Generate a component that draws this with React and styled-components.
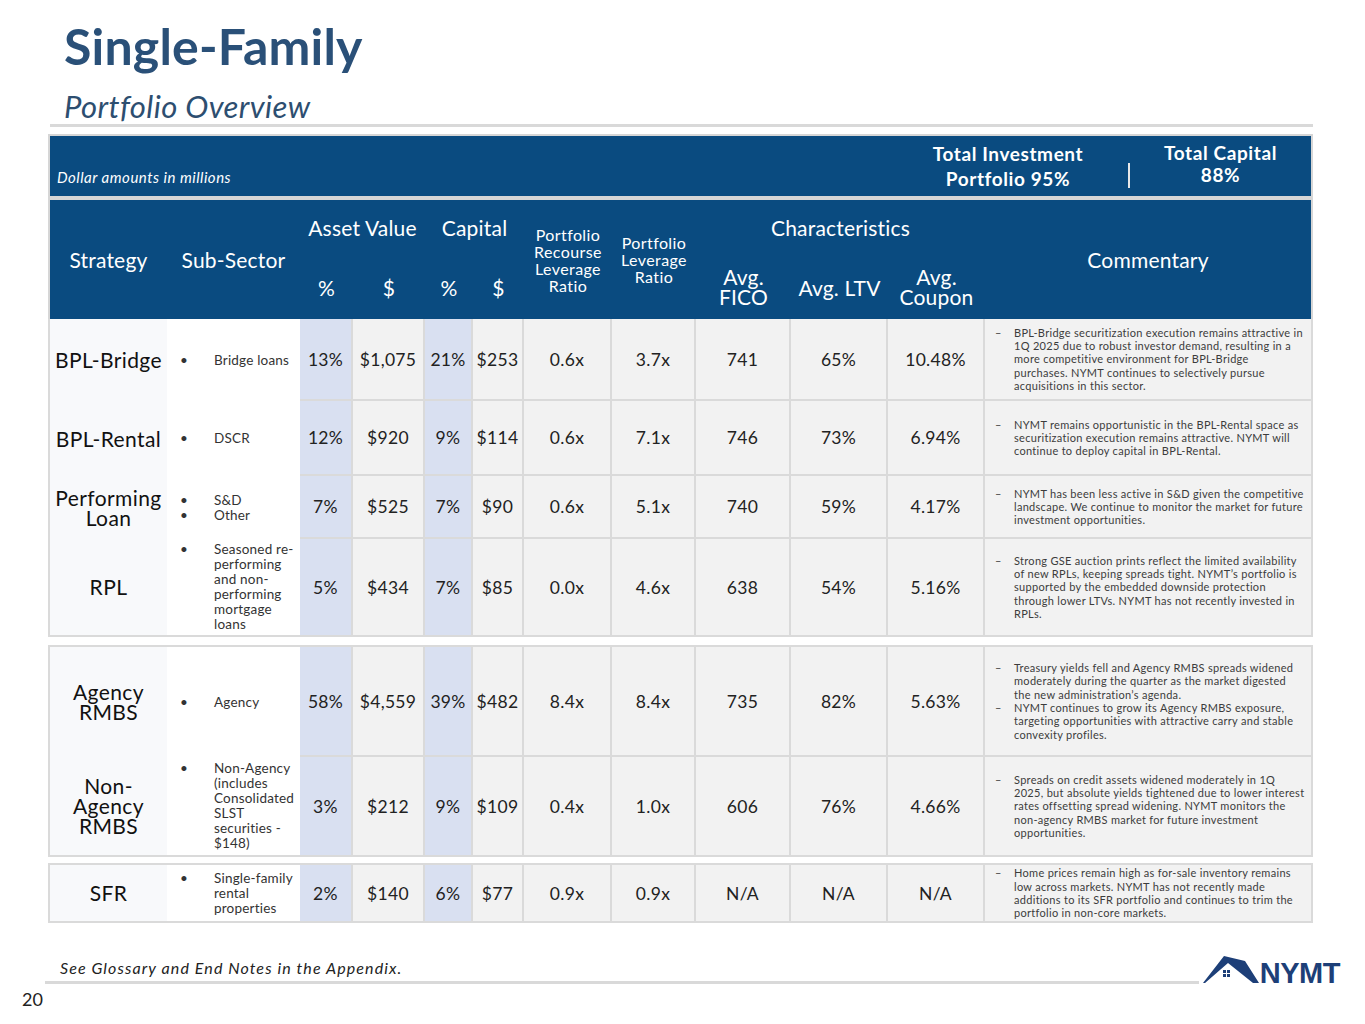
import React from 'react';
import styled, { createGlobalStyle } from 'styled-components';

const BLUE = '#0a4b80';
const LINE = '#dadada';
const COLS = '117px 133px 53px 72px 48px 51px 88px 84px 95px 97px 97px 1fr';

const GlobalStyle = createGlobalStyle`
    html, body {
        margin: 0;
        padding: 0;
        background: #fff;
    }
    body {
        font-family: Lato, "Noto Sans", sans-serif;
        color: #222;
    }
`;

const Page = styled.div`
    width: 1365px;
    height: 1024px;
    overflow: hidden;
    display: flex;
    flex-direction: column;
`;

const TitleBlock = styled.div`
    padding: 16px 0 0 64px;
`;

const Title = styled.h1`
    margin: 0;
    font-size: 50px;
    line-height: 60px;
    font-weight: 700;
    color: #2a5078;
    letter-spacing: 0.2px;
`;

const Subtitle = styled.h2`
    margin: 12px 0 0;
    font-size: 31px;
    line-height: 36px;
    font-weight: 400;
    font-style: italic;
    color: #2d4e70;
    letter-spacing: 0.4px;
`;

const TopRule = styled.div`
    margin: 0 52px 0 50px;
    height: 3px;
    background: #d9d9d9;
`;

const Table = styled.div`
    margin: 7px 0 0 48px;
    width: 1265px;
    display: flex;
    flex-direction: column;
`;

const Banner = styled.div`
    height: 64px;
    box-sizing: border-box;
    border: 2px solid #d6d6d6;
    background: ${BLUE};
    display: flex;
    color: #fff;
`;

const BannerNote = styled.div`
    flex: 1;
    align-self: flex-end;
    padding: 0 0 10px 7px;
    font-size: 15px;
    font-style: italic;
    letter-spacing: 0.5px;
`;

const Stat = styled.div`
    width: ${p => p.$w}px;
    align-self: center;
    text-align: center;
    font-size: 19px;
    font-weight: 700;
    letter-spacing: 0.6px;
    line-height: ${p => p.$lh}px;
    margin-top: ${p => p.$mt || 0}px;
`;

const StatDivider = styled.div`
    width: 2px;
    height: 25px;
    background: #e8e8e8;
    align-self: flex-end;
    margin: 0 0 8px 25px;
`;

const Header = styled.div`
    display: grid;
    grid-template-columns: ${COLS};
    grid-template-rows: 55px 64px;
    background: ${BLUE};
    border: 2px solid #d6d6d6;
    border-bottom: none;
    color: #fff;
`;

const HeadCell = styled.div`
    grid-column: ${p => p.$col};
    grid-row: ${p => p.$row};
    display: flex;
    align-items: center;
    justify-content: center;
    text-align: center;
    font-size: ${p => p.$size || 21}px;
    line-height: ${p => p.$lh || 21}px;
    letter-spacing: ${p => p.$ls ?? 0.2}px;
`;

const Group = styled.div`
    display: flex;
    flex-direction: column;
    border: 2px solid ${LINE};
    border-top: ${p => (p.$open ? 'none' : `2px solid ${LINE}`)};
    margin-top: ${p => p.$gap || 0}px;
`;

const Row = styled.div`
    display: grid;
    grid-template-columns: ${COLS};
    height: ${p => p.$h}px;
`;

const tones = {
    strategy: '#f8f9fb',
    sub: '#ffffff',
    pct: '#d9e0f1',
    num: '#f2f2f2',
    comment: '#f2f2f2',
};

const Cell = styled.div`
    box-sizing: border-box;
    display: flex;
    align-items: center;
    justify-content: ${p => (p.$tone === 'sub' || p.$tone === 'comment' ? 'flex-start' : 'center')};
    background: ${p => tones[p.$tone]};
    border-right: ${p => (p.$tone === 'strategy' || p.$tone === 'sub' || p.$tone === 'comment' ? 'none' : `2px solid ${LINE}`)};
    border-bottom: ${p => (p.$last || p.$tone === 'strategy' || p.$tone === 'sub' ? 'none' : `2px solid ${LINE}`)};
    font-size: 17.5px;
    letter-spacing: 0.3px;
    color: #222;
`;

const StrategyName = styled.div`
    text-align: center;
    font-size: 21px;
    line-height: 20px;
    letter-spacing: 0.4px;
    color: #111;
`;

const SubList = styled.div`
    display: flex;
    flex-direction: column;
    padding-left: 13px;
`;

const SubItem = styled.div`
    display: flex;
    font-size: 13.5px;
    line-height: 15px;
    letter-spacing: 0.2px;
    color: #333;
`;

const Bullet = styled.span`
    width: 34px;
    flex: none;
`;

const CommentList = styled.div`
    display: flex;
    flex-direction: column;
    padding-left: 10px;
    font-size: 11px;
    line-height: 13.3px;
    letter-spacing: 0.3px;
    color: #3c3c3c;
`;

const CommentItem = styled.div`
    display: flex;
`;

const Dash = styled.span`
    width: 19px;
    flex: none;
`;

const Lines = styled.div`
    white-space: nowrap;
`;

const Footer = styled.div`
    display: flex;
    align-items: flex-end;
    padding: 0 25px 0 45px;
    margin-top: 31px;
`;

const FootLeft = styled.div`
    flex: 1;
    display: flex;
    flex-direction: column;
`;

const Note = styled.div`
    padding-left: 15px;
    font-size: 16px;
    line-height: 20px;
    font-style: italic;
    letter-spacing: 1.1px;
    color: #222;
`;

const FootRule = styled.div`
    margin-top: 3px;
    height: 3px;
    background: #d9d9d9;
`;

const Logo = styled.div`
    display: flex;
    align-items: flex-end;
    margin-left: 2px;
    color: #1d3f78;
`;

const LogoText = styled.span`
    font-family: "Liberation Sans", Arial, sans-serif;
    font-weight: 700;
    font-size: 29px;
    line-height: 21px;
    letter-spacing: -0.5px;
    margin-left: 1px;
`;

const PageNum = styled.div`
    padding: 5px 0 0 22px;
    font-size: 18px;
    line-height: 20px;
    color: #222;
`;

const groups = [
    [
        {
            h: 82,
            name: ['BPL-Bridge'],
            sub: [['Bridge loans']],
            v: ['13%', '$1,075', '21%', '$253', '0.6x', '3.7x', '741', '65%', '10.48%'],
            c: [[
                'BPL-Bridge securitization execution remains attractive in',
                '1Q 2025 due to robust investor demand, resulting in a',
                'more competitive environment for BPL-Bridge',
                'purchases. NYMT continues to selectively pursue',
                'acquisitions in this sector.',
            ]],
        },
        {
            h: 75,
            name: ['BPL-Rental'],
            sub: [['DSCR']],
            v: ['12%', '$920', '9%', '$114', '0.6x', '7.1x', '746', '73%', '6.94%'],
            c: [[
                'NYMT remains opportunistic in the BPL-Rental space as',
                'securitization execution remains attractive. NYMT will',
                'continue to deploy capital in BPL-Rental.',
            ]],
        },
        {
            h: 63,
            name: ['Performing', 'Loan'],
            sub: [['S&D'], ['Other']],
            v: ['7%', '$525', '7%', '$90', '0.6x', '5.1x', '740', '59%', '4.17%'],
            c: [[
                'NYMT has been less active in S&D given the competitive',
                'landscape. We continue to monitor the market for future',
                'investment opportunities.',
            ]],
        },
        {
            h: 96,
            name: ['RPL'],
            sub: [['Seasoned re-', 'performing', 'and non-', 'performing', 'mortgage', 'loans']],
            v: ['5%', '$434', '7%', '$85', '0.0x', '4.6x', '638', '54%', '5.16%'],
            c: [[
                'Strong GSE auction prints reflect the limited availability',
                'of new RPLs, keeping spreads tight. NYMT\u2019s portfolio is',
                'supported by the embedded downside protection',
                'through lower LTVs. NYMT has not recently invested in',
                'RPLs.',
            ]],
        },
    ],
    [
        {
            h: 110,
            name: ['Agency', 'RMBS'],
            sub: [['Agency']],
            v: ['58%', '$4,559', '39%', '$482', '8.4x', '8.4x', '735', '82%', '5.63%'],
            c: [
                [
                    'Treasury yields fell and Agency RMBS spreads widened',
                    'moderately during the quarter as the market digested',
                    'the new administration\u2019s agenda.',
                ],
                [
                    'NYMT continues to grow its Agency RMBS exposure,',
                    'targeting opportunities with attractive carry and stable',
                    'convexity profiles.',
                ],
            ],
        },
        {
            h: 98,
            name: ['Non-', 'Agency', 'RMBS'],
            sub: [['Non-Agency', '(includes', 'Consolidated', 'SLST', 'securities -', '$148)']],
            v: ['3%', '$212', '9%', '$109', '0.4x', '1.0x', '606', '76%', '4.66%'],
            c: [[
                'Spreads on credit assets widened moderately in 1Q',
                '2025, but absolute yields tightened due to lower interest',
                'rates offsetting spread widening. NYMT monitors the',
                'non-agency RMBS market for future investment',
                'opportunities.',
            ]],
        },
    ],
    [
        {
            h: 56,
            name: ['SFR'],
            sub: [['Single-family', 'rental', 'properties']],
            v: ['2%', '$140', '6%', '$77', '0.9x', '0.9x', 'N/A', 'N/A', 'N/A'],
            c: [[
                'Home prices remain high as for-sale inventory remains',
                'low across markets. NYMT has not recently made',
                'additions to its SFR portfolio and continues to trim the',
                'portfolio in non-core markets.',
            ]],
        },
    ],
];

const valueTone = i => (i === 0 || i === 2 ? 'pct' : 'num');

const Roof = () => (
    <svg width="58" height="30" viewBox="0 0 58 30">
        <polygon points="2,29 23,2 44,7 58,29 52,29 27,9 4,29" fill="currentColor" />
        <rect x="22" y="16" width="3" height="3" fill="currentColor" />
        <rect x="26" y="16" width="3" height="3" fill="currentColor" />
        <rect x="22" y="20" width="3" height="3" fill="currentColor" />
        <rect x="26" y="20" width="3" height="3" fill="currentColor" />
    </svg>
);

const DataRow = ({ row, last }) => (
    <Row $h={row.h}>
        <Cell $tone="strategy">
            <StrategyName>
                {row.name.map((n, i) => <div key={i}>{n}</div>)}
            </StrategyName>
        </Cell>
        <Cell $tone="sub">
            <SubList>
                {row.sub.map((item, i) => (
                    <SubItem key={i}>
                        <Bullet>•</Bullet>
                        <div>{item.map((l, j) => <div key={j}>{l}</div>)}</div>
                    </SubItem>
                ))}
            </SubList>
        </Cell>
        {row.v.map((val, i) => (
            <Cell key={i} $tone={valueTone(i)} $last={last}>{val}</Cell>
        ))}
        <Cell $tone="comment" $last={last}>
            <CommentList>
                {row.c.map((para, i) => (
                    <CommentItem key={i}>
                        <Dash>–</Dash>
                        <Lines>{para.map((l, j) => <div key={j}>{l}</div>)}</Lines>
                    </CommentItem>
                ))}
            </CommentList>
        </Cell>
    </Row>
);

export default function App() {
    return (
        <Page>
            <GlobalStyle />
            <TitleBlock>
                <Title>Single-Family</Title>
                <Subtitle>Portfolio Overview</Subtitle>
            </TitleBlock>
            <TopRule />
            <Table>
                <Banner>
                    <BannerNote>Dollar amounts in millions</BannerNote>
                    <Stat $w={190} $lh={25}>
                        Total Investment<br />Portfolio 95%
                    </Stat>
                    <StatDivider />
                    <Stat $w={181} $lh={22} $mt={-4}>
                        Total Capital<br />88%
                    </Stat>
                </Banner>
                <Header>
                    <HeadCell $col="1" $row="1 / 3">Strategy</HeadCell>
                    <HeadCell $col="2" $row="1 / 3">Sub-Sector</HeadCell>
                    <HeadCell $col="3 / 5" $row="1">Asset Value</HeadCell>
                    <HeadCell $col="5 / 7" $row="1">Capital</HeadCell>
                    <HeadCell $col="3" $row="2">%</HeadCell>
                    <HeadCell $col="4" $row="2">$</HeadCell>
                    <HeadCell $col="5" $row="2">%</HeadCell>
                    <HeadCell $col="6" $row="2">$</HeadCell>
                    <HeadCell $col="7" $row="1 / 3" $size={16} $lh={17} $ls={0.4}>
                        Portfolio<br />Recourse<br />Leverage<br />Ratio
                    </HeadCell>
                    <HeadCell $col="8" $row="1 / 3" $size={16} $lh={17} $ls={0.4}>
                        Portfolio<br />Leverage<br />Ratio
                    </HeadCell>
                    <HeadCell $col="9 / 12" $row="1">Characteristics</HeadCell>
                    <HeadCell $col="9" $row="2" $lh={20}>Avg.<br />FICO</HeadCell>
                    <HeadCell $col="10" $row="2">Avg. LTV</HeadCell>
                    <HeadCell $col="11" $row="2" $lh={20}>Avg.<br />Coupon</HeadCell>
                    <HeadCell $col="12" $row="1 / 3">Commentary</HeadCell>
                </Header>
                {groups.map((rows, gi) => (
                    <Group key={gi} $open={gi === 0} $gap={gi === 0 ? 0 : gi === 1 ? 8 : 6}>
                        {rows.map((row, ri) => (
                            <DataRow key={ri} row={row} last={ri === rows.length - 1} />
                        ))}
                    </Group>
                ))}
            </Table>
            <Footer>
                <FootLeft>
                    <Note>See Glossary and End Notes in the Appendix.</Note>
                    <FootRule />
                </FootLeft>
                <Logo>
                    <Roof />
                    <LogoText>NYMT</LogoText>
                </Logo>
            </Footer>
            <PageNum>20</PageNum>
        </Page>
    );
}
